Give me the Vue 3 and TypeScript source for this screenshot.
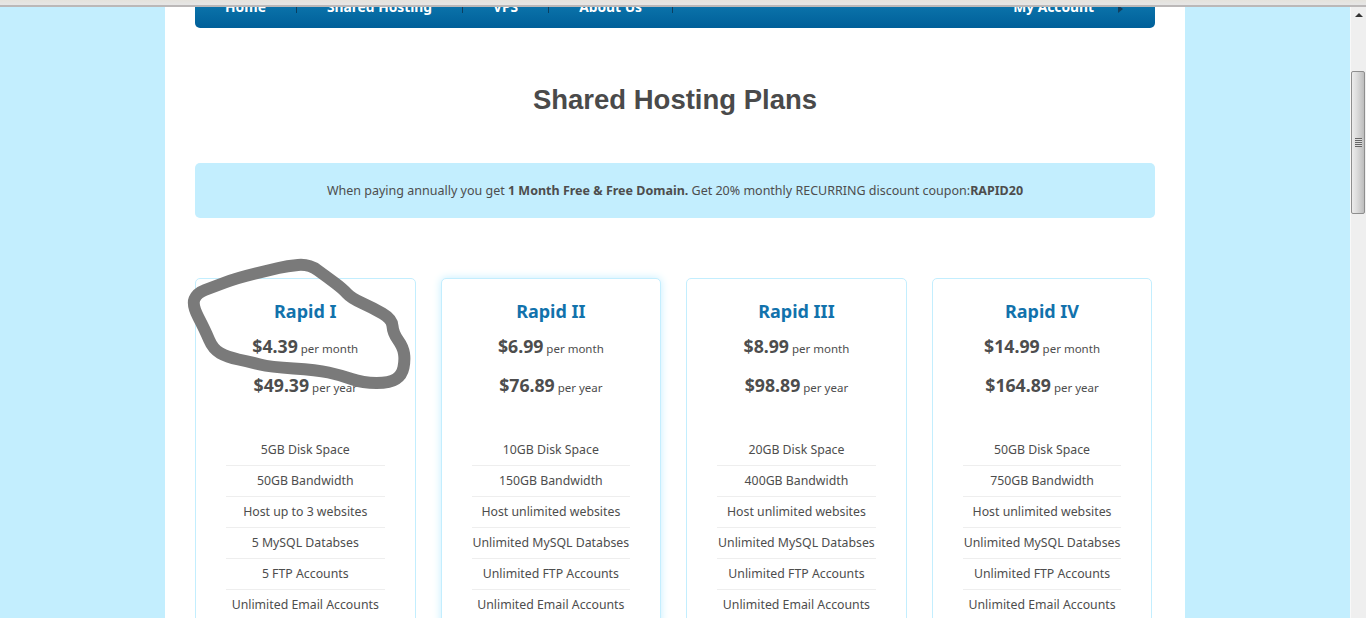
<script setup lang="ts">
type Plan = {
  name: string
  monthly: string
  yearly: string
  features: string[]
  glow?: boolean
}

const navLeft = ['Home', 'Shared Hosting', 'VPS', 'About Us']

const plans: Plan[] = [
  {
    name: 'Rapid I',
    monthly: '$4.39',
    yearly: '$49.39',
    features: ['5GB Disk Space', '50GB Bandwidth', 'Host up to 3 websites', '5 MySQL Databses', '5 FTP Accounts', 'Unlimited Email Accounts'],
  },
  {
    name: 'Rapid II',
    monthly: '$6.99',
    yearly: '$76.89',
    glow: true,
    features: ['10GB Disk Space', '150GB Bandwidth', 'Host unlimited websites', 'Unlimited MySQL Databses', 'Unlimited FTP Accounts', 'Unlimited Email Accounts'],
  },
  {
    name: 'Rapid III',
    monthly: '$8.99',
    yearly: '$98.89',
    features: ['20GB Disk Space', '400GB Bandwidth', 'Host unlimited websites', 'Unlimited MySQL Databses', 'Unlimited FTP Accounts', 'Unlimited Email Accounts'],
  },
  {
    name: 'Rapid IV',
    monthly: '$14.99',
    yearly: '$164.89',
    features: ['50GB Disk Space', '750GB Bandwidth', 'Host unlimited websites', 'Unlimited MySQL Databses', 'Unlimited FTP Accounts', 'Unlimited Email Accounts'],
  },
]

// scribble over the first plan, points are relative to the plan grid
const points: [number, number][] = [
  [-3, 27], [2, 15], [18, 9], [42, 0], [75, -8], [92, -12], [114, -14], [132, -1], [148, 11], [156, 20],
  [178, 30], [197, 41], [198, 55], [208, 69], [210, 82], [207, 97], [195, 105], [168, 105], [145, 97],
  [122, 92], [75, 89], [55, 84], [32, 79], [18, 71], [10, 52],
]

// quadratic curves through the midpoints keep the hand-drawn line smooth
const mid = (a: [number, number], b: [number, number]) => `${(a[0] + b[0]) / 2} ${(a[1] + b[1]) / 2}`
const scribble =
  `M${mid(points[points.length - 1], points[0])} ` +
  points.map((p, i) => `Q${p[0]} ${p[1]} ${mid(p, points[(i + 1) % points.length])}`).join(' ') +
  ' Z'
</script>

<template>
  <div class="window">
    <div class="chrome"></div>
    <div class="viewport">
      <main class="page">
        <div class="column">
          <nav class="nav">
            <ul class="nav__list">
              <li v-for="item in navLeft" :key="item" class="nav__item">{{ item }}</li>
            </ul>
            <div class="nav__account">
              <span>My Account</span>
              <i class="nav__arrow"></i>
            </div>
          </nav>

          <h1 class="title">Shared Hosting Plans</h1>

          <p class="banner">
            When paying annually you get <b>1 Month Free &amp; Free Domain.</b> Get 20% monthly RECURRING discount coupon:<b>RAPID20</b>
          </p>

          <section class="plans">
            <article v-for="plan in plans" :key="plan.name" class="plan" :class="{ 'plan--glow': plan.glow }">
              <h2 class="plan__name">{{ plan.name }}</h2>
              <p class="plan__price"><b>{{ plan.monthly }}</b> per month</p>
              <p class="plan__price plan__price--year"><b>{{ plan.yearly }}</b> per year</p>
              <ul class="plan__features">
                <li v-for="feature in plan.features" :key="feature">{{ feature }}</li>
              </ul>
            </article>
            <svg class="scribble" width="240" height="140" viewBox="-10 -20 240 140">
              <path :d="scribble" />
            </svg>
          </section>
        </div>
      </main>
      <aside class="scrollbar">
        <i class="scrollbar__up"></i>
        <div class="scrollbar__thumb">
          <span class="scrollbar__grip"></span>
        </div>
      </aside>
    </div>
  </div>
</template>

<style scoped>
.window {
  display: flex;
  flex-direction: column;
  height: 618px;
  overflow: hidden;
  background: #c3eefe;
  font-family: 'Noto Sans', 'Open Sans', sans-serif;
  color: #4d4d4d;
}

.chrome {
  flex: none;
  height: 7px;
  box-sizing: border-box;
  background: linear-gradient(#e4e2dc, #e6e6e6);
  border-bottom: 2px solid #bbb8b8;
}

.viewport {
  flex: 1;
  min-height: 0;
  display: flex;
}

.page {
  flex: 1;
  min-width: 0;
  display: flex;
  justify-content: center;
  overflow: hidden;
}

.column {
  width: 1020px;
  box-sizing: border-box;
  padding: 0 30px;
  background: #fff;
}

.nav {
  display: flex;
  justify-content: space-between;
  height: 21px;
  border-radius: 0 0 5px 5px;
  background: linear-gradient(#0a72a9, #005f99);
  color: #fff;
  font-size: 13.8px;
  font-weight: 700;
  overflow: hidden;
}

.nav__list {
  display: flex;
  height: 6px;
  margin: 0;
  padding: 0;
  list-style: none;
}

.nav__item {
  padding: 0 30px;
  line-height: 0;
  border-right: 1px solid #0a3f60;
}

.nav__account {
  display: flex;
  height: 6px;
  line-height: 0;
  padding-right: 32px;
  gap: 24px;
}

.nav__arrow {
  width: 0;
  height: 0;
  margin-top: -2px;
  border-left: 5px solid #123f5e;
  border-top: 4px solid transparent;
  border-bottom: 4px solid transparent;
}

.title {
  margin: 56px 0 0;
  font-family: 'Liberation Sans', Arial, sans-serif;
  font-size: 27.5px;
  line-height: 32px;
  font-weight: 700;
  text-align: center;
  color: #4a4a4a;
}

.banner {
  margin: 47px 0 0;
  height: 55px;
  line-height: 55px;
  border-radius: 5px;
  background: #c3eefe;
  font-size: 12.5px;
  text-align: center;
}

.plans {
  position: relative;
  display: grid;
  grid-template-columns: repeat(4, 220.5px);
  column-gap: 25.1px;
  margin-top: 60px;
}

.plan {
  box-sizing: border-box;
  height: 400px;
  padding: 20px 30px 0;
  border: 1px solid #c3eefe;
  border-radius: 5px;
  background: #fff;
  text-align: center;
}

.plan--glow {
  box-shadow: 0 0 8px #c3eefe;
}

.plan__name {
  margin: 0;
  font-size: 18px;
  line-height: 24px;
  font-weight: 700;
  color: #1272ac;
}

.plan__price {
  margin: 11px 0 0;
  font-size: 11.5px;
  line-height: 24px;
}

.plan__price b {
  font-size: 17.7px;
}

.plan__price--year {
  margin-top: 12px;
}

.plan__features {
  margin: 35px 0 0;
  padding: 0;
  list-style: none;
  font-size: 12.3px;
}

.plan__features li {
  height: 31px;
  box-sizing: border-box;
  line-height: 30px;
  white-space: nowrap;
  border-bottom: 1px solid #eee;
}

.scribble {
  position: absolute;
  left: -10px;
  top: -20px;
  pointer-events: none;
}

.scribble path {
  fill: none;
  stroke: #7a7a7a;
  stroke-width: 12;
  stroke-linejoin: round;
  stroke-linecap: round;
}

.scrollbar {
  flex: none;
  width: 16px;
  box-sizing: border-box;
  display: flex;
  flex-direction: column;
  align-items: center;
  border-left: 1px solid #f8f8f8;
  background: #efefef;
}

.scrollbar__up {
  width: 0;
  height: 0;
  margin-top: 6px;
  border-left: 4px solid transparent;
  border-right: 4px solid transparent;
  border-bottom: 4px solid #333;
}

.scrollbar__thumb {
  display: flex;
  align-items: center;
  justify-content: center;
  align-self: flex-start;
  width: 14px;
  height: 143px;
  margin-top: 54px;
  box-sizing: border-box;
  border: 1px solid #8e8e8e;
  border-radius: 2px;
  background: linear-gradient(90deg, #ececec, #dcdcdc 40%, #bdbdbd);
}

.scrollbar__grip {
  width: 7px;
  height: 9px;
  background: repeating-linear-gradient(#666 0 1px, #ddd 1px 2px);
}
</style>

<style>
html,
body {
  margin: 0;
  overflow: hidden;
}
</style>
